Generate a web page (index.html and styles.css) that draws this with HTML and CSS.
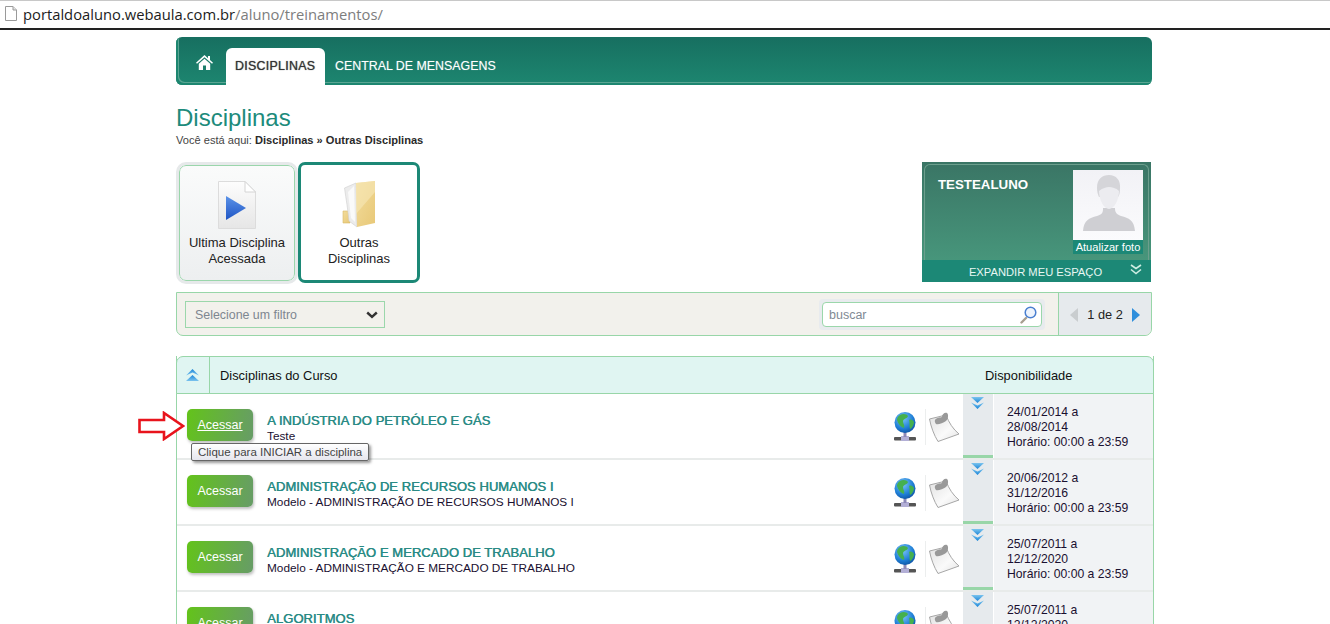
FILE: index.html
```html
<!DOCTYPE html>
<html lang="pt-BR">
<head>
<meta charset="utf-8">
<title>Disciplinas</title>
<link rel="stylesheet" href="styles.css">
</head>
<body>
<svg class="defs" width="0" height="0" aria-hidden="true">
  <defs>
    <linearGradient id="chev" x1="0" y1="0" x2="0" y2="1"><stop offset="0" stop-color="#7cc4ee"/><stop offset="1" stop-color="#1b86d8"/></linearGradient>
    <radialGradient id="globe" cx=".4" cy=".3" r=".8"><stop offset="0" stop-color="#7cc4f8"/><stop offset=".6" stop-color="#1f7fd6"/><stop offset="1" stop-color="#0c4a98"/></radialGradient>
    <linearGradient id="play" x1="0" y1="0" x2="0" y2="1"><stop offset="0" stop-color="#5c93e8"/><stop offset="1" stop-color="#1f55c4"/></linearGradient>
    <linearGradient id="folder" x1="0" y1="0" x2="1" y2="1"><stop offset="0" stop-color="#f2dc9c"/><stop offset="1" stop-color="#e8c877"/></linearGradient>
    <linearGradient id="doc" x1="0" y1="0" x2="0" y2="1"><stop offset="0" stop-color="#fdfdfd"/><stop offset="1" stop-color="#e6e6e6"/></linearGradient>
    <linearGradient id="paper" x1="0" y1="0" x2="1" y2="1"><stop offset="0" stop-color="#e2e2e2"/><stop offset=".6" stop-color="#fafafa"/><stop offset="1" stop-color="#e4e4e4"/></linearGradient>
    <linearGradient id="avatarbg" x1="0" y1="0" x2="0" y2="1"><stop offset="0" stop-color="#f2f2f6"/><stop offset="1" stop-color="#fbfbfd"/></linearGradient>
    <symbol id="i-down" viewBox="0 0 13 12"><path d="M0 0H13L6.500 6Z" fill="url(#chev)"/><path d="M0 5.500L6.500 12L13 5.500L6.500 8.500Z" fill="url(#chev)"/></symbol>
    <symbol id="i-globe" viewBox="0 0 22 30">
      <rect x="0" y="25" width="22" height="3.500" rx="1" fill="#555"/>
      <path d="M7 29V24H15V29Z" fill="#b3afd6"/>
      <rect x="9.500" y="19" width="3" height="6" fill="#8d89b8"/>
      <circle cx="11" cy="10.500" r="10.500" fill="url(#globe)"/>
      <path d="M6 3C9 1 13 2 14 4C13 7 10 6 9 9C9 12 11 13 10 16C7 15 4 12 3 8C3 6 4 4 6 3ZM15 8C17 7 19 8 20 10C20 13 18 16 16 17C15 14 16 11 15 8Z" fill="#45b04e"/>
    </symbol>
    <symbol id="i-note" viewBox="0 0 31 30">
      <path d="M.5 7L17 3C20 11 24 17 30 22L9 29.500C5 23 2 15 .5 7Z" fill="url(#paper)" stroke="#a6a6a6"/>
      <path d="M6 8C8 5 11 6 13 5C13 2 16 0 18 1C20 3 19 7 17 9C14 11 9 13 7 12C6 11 5.500 9 6 8Z" fill="#999"/>
    </symbol>
  </defs>
</svg>

<header class="urlbar">
  <svg class="url-page" width="12" height="15" viewBox="0 0 12 15"><path d="M.5.500H8L11.500 4V14.500H.5Z" fill="#fff" stroke="#9a9a9a"/><path d="M8 .5V4H11.500" fill="#e4e4e4" stroke="#9a9a9a"/></svg>
  <span class="url-host">portaldoaluno.webaula.com.br</span><span class="url-path">/aluno/treinamentos/</span>
</header>

<main class="page">
  <nav class="topnav">
    <a class="nav-home" aria-label="Início">
      <svg width="17" height="15" viewBox="0 0 17 15"><path d="M8.500 0L12 3.200V1H14V5L17 7.700L16 8.800L8.500 2.200L1 8.800L0 7.700ZM2.800 8.800L8.500 3.800L14.200 8.800V15H10V10.500H7V15H2.800Z" fill="#fff"/></svg>
    </a>
    <a class="nav-tab nav-active">DISCIPLINAS</a>
    <a class="nav-tab">CENTRAL DE MENSAGENS</a>
  </nav>

  <h1 class="title">Disciplinas</h1>
  <p class="crumbs">Você está aqui: <b>Disciplinas » Outras Disciplinas</b></p>

  <section class="hero">
    <div class="tiles">
      <a class="tile">
        <svg width="38" height="48" viewBox="0 0 38 48"><path d="M.5.500H27L37.500 11V47.500H.5Z" fill="url(#doc)" stroke="#dcdcdc"/><path d="M27 .5V11H37.500Z" fill="#fff" stroke="#d4d4d4"/><path d="M8 15L28 27L8 39Z" fill="url(#play)"/></svg>
        <span>Ultima Disciplina Acessada</span>
      </a>
      <a class="tile tile-active">
        <svg width="36" height="48" viewBox="0 0 36 48"><path d="M2 31H9V43H2Z" fill="url(#folder)" stroke="#d9b864" stroke-width=".6"/><path d="M3.500 8L15 3L16 47L8 41C7 30 5 19 3.500 8Z" fill="#ececec" stroke="#cfcfcf" stroke-width=".6"/><path d="M7 12L13 6L14 42L10 38Z" fill="#fafafa"/><path d="M15 3L34 1V43L16 47Z" fill="url(#folder)"/><path d="M15 3L34 1V12L15 34Z" fill="#f7e8b8" opacity=".6"/></svg>
        <span class="tile-narrow">Outras Disciplinas</span>
      </a>
    </div>

    <aside class="profile">
      <div class="profile-body">
        <strong class="profile-name">TESTEALUNO</strong>
        <div class="avatar">
          <svg width="70" height="70" viewBox="0 0 70 70"><rect width="70" height="70" fill="url(#avatarbg)"/><path d="M24 46C30 44 30 42 30 38H42C42 42 43 44 48 46C56 48 61 50 62 61H10C11 50 16 48 24 46Z" fill="#cfcfd3"/><path d="M24 18C24 9 29 5 36 5C43 5 48 10 47 19C47 23 46 26 45 27H26C25 25 24 22 24 18Z" fill="#d5d5d9"/><path d="M26 21C30 18 33 17 36 17C39 17 43 18 46 21C46 30 41 39 36 39C31 39 26 30 26 21Z" fill="#ececf0"/></svg>
          <span class="avatar-cap">Atualizar foto</span>
        </div>
      </div>
      <a class="profile-foot">
        <span>EXPANDIR MEU ESPAÇO</span>
        <svg class="foot-chev" width="12" height="11" viewBox="0 0 12 11"><path d="M1 1L6 4.500L11 1M1 5.500L6 9.500L11 5.500" fill="none" stroke="#cfeee4" stroke-width="1.600"/></svg>
      </a>
    </aside>
  </section>

  <section class="filters">
    <div class="select">
      <span>Selecione um filtro</span>
      <svg width="12" height="8" viewBox="0 0 12 8"><path d="M1.200 1.500L6 5.800L10.800 1.500" fill="none" stroke="#333" stroke-width="2.400"/></svg>
    </div>
    <div class="search-wrap">
      <div class="search">
        <span>buscar</span>
        <svg width="17" height="18" viewBox="0 0 17 18"><path d="M1.500 16.500L6 12" stroke="#a89f90" stroke-width="2.400" stroke-linecap="round"/><circle cx="10.500" cy="6.500" r="5.300" fill="#eef4fd" stroke="#4a7fd0" stroke-width="1.500"/></svg>
      </div>
    </div>
    <div class="pager">
      <svg width="8" height="14" viewBox="0 0 8 14"><path d="M8 0V14L0 7Z" fill="#c9cdcf"/></svg>
      <span>1 de 2</span>
      <svg width="8" height="14" viewBox="0 0 8 14"><path d="M0 0V14L8 7Z" fill="#2f8fdc"/></svg>
    </div>
  </section>

  <section class="table">
    <div class="thead">
      <div class="th-toggle"><svg width="13" height="12" viewBox="0 0 13 12"><g transform="matrix(1 0 0 -1 0 12)"><use href="#i-down"/></g></svg></div>
      <div class="th-name">Disciplinas do Curso</div>
      <div class="th-avail">Disponibilidade</div>
    </div>

    <article class="row">
      <div class="row-main">
        <a class="btn btn-hover">Acessar</a>
        <div class="info"><h2>A INDÚSTRIA DO PETRÓLEO E GÁS</h2><p>Teste</p></div>
      </div>
      <div class="row-icons"><svg class="ic-globe"><use href="#i-globe"/></svg><i class="sep"></i><svg class="ic-note"><use href="#i-note"/></svg></div>
      <div class="expand"><svg class="ic-down"><use href="#i-down"/></svg></div>
      <div class="dates">24/01/2014 a<br>28/08/2014<br>Horário: 00:00 a 23:59</div>
    </article>

    <article class="row">
      <div class="row-main">
        <a class="btn">Acessar</a>
        <div class="info"><h2>ADMINISTRAÇÃO DE RECURSOS HUMANOS I</h2><p>Modelo - ADMINISTRAÇÃO DE RECURSOS HUMANOS I</p></div>
      </div>
      <div class="row-icons"><svg class="ic-globe"><use href="#i-globe"/></svg><i class="sep"></i><svg class="ic-note"><use href="#i-note"/></svg></div>
      <div class="expand"><svg class="ic-down"><use href="#i-down"/></svg></div>
      <div class="dates">20/06/2012 a<br>31/12/2016<br>Horário: 00:00 a 23:59</div>
    </article>

    <article class="row">
      <div class="row-main">
        <a class="btn">Acessar</a>
        <div class="info"><h2>ADMINISTRAÇÃO E MERCADO DE TRABALHO</h2><p>Modelo - ADMINISTRAÇÃO E MERCADO DE TRABALHO</p></div>
      </div>
      <div class="row-icons"><svg class="ic-globe"><use href="#i-globe"/></svg><i class="sep"></i><svg class="ic-note"><use href="#i-note"/></svg></div>
      <div class="expand"><svg class="ic-down"><use href="#i-down"/></svg></div>
      <div class="dates">25/07/2011 a<br>12/12/2020<br>Horário: 00:00 a 23:59</div>
    </article>

    <article class="row">
      <div class="row-main">
        <a class="btn">Acessar</a>
        <div class="info"><h2>ALGORITMOS</h2></div>
      </div>
      <div class="row-icons"><svg class="ic-globe"><use href="#i-globe"/></svg><i class="sep"></i><svg class="ic-note"><use href="#i-note"/></svg></div>
      <div class="expand"><svg class="ic-down"><use href="#i-down"/></svg></div>
      <div class="dates">25/07/2011 a<br>12/12/2020</div>
    </article>
  </section>
</main>

<svg class="red-arrow" width="47" height="30" viewBox="0 0 47 30"><path d="M1.500 9H26V2L45 15L26 28V21H1.500Z" fill="#fff" stroke="#e8141c" stroke-width="2.600"/></svg>
<div class="tooltip">Clique para INICIAR a disciplina</div>
</body>
</html>
```

FILE: styles.css
```css
* { box-sizing: border-box; }
html, body { margin: 0; padding: 0; height: 624px; overflow: hidden; background: #fff; }
body { font-family: "Liberation Sans", Arial, sans-serif; font-size: 12px; color: #111; position: relative; }
.defs { position: absolute; }
a { color: inherit; text-decoration: none; }
h1, h2, p { margin: 0; }

.urlbar { height: 30px; display: flex; align-items: center; padding: 0 0 2px 5px; border-top: 1px solid #c8c8c8; border-bottom: 2px solid #222; font-family: "Open Sans", sans-serif; font-size: 14.750px; background: #fff; }
.url-page { margin-right: 6px; }
.url-host { color: #1c1c1c; }
.url-path { color: #7d7d7d; }

.page { width: 978px; margin: 7px 0 0 176px; }

.topnav { width: 976px; height: 48px; display: flex; align-items: flex-end; padding-left: 20px; border-radius: 6px; background: linear-gradient(#176f60, #1d8670); box-shadow: inset 2px -2px 0 0 #1d8670, inset 3px -3px 0 0 #5aa592; }
.nav-home { width: 30px; height: 37px; display: flex; align-items: center; padding-bottom: 8px; }
.nav-tab { height: 37px; display: flex; align-items: center; padding: 0 10px 2px; font-size: 12.400px; color: #fff; text-shadow: 0 0 1px rgba(255,255,255,.4); }
.nav-active { background: #fff; color: #333; border-radius: 6px 6px 0 0; text-shadow: 0 0 1px #555; letter-spacing: .3px; width: 99px; padding-left: 9px; }

.title { margin-top: 19px; font-size: 24px; line-height: 27px; font-weight: 400; color: #1d8b7c; }
.crumbs { margin-top: 2px; font-size: 11.100px; line-height: 14px; color: #444; }
.crumbs b { color: #2a2a2a; }

.hero { margin-top: 15px; width: 975px; height: 120px; display: flex; justify-content: space-between; }
.tiles { display: flex; gap: 2px; }
.tile { display: flex; flex-direction: column; align-items: center; border-radius: 7px; font-size: 13px; line-height: 16px; color: #222; text-align: center; }
.tile:first-child { margin: 3px 0 0 3px; width: 116px; height: 116px; padding-top: 15px; border: 1px solid #9ad6ab; outline: 3px solid #e6e9ea; background: linear-gradient(#fafbfb, #edeff0); }
.tile span { margin-top: 6px; width: 112px; }
.tile-active { width: 122px; height: 121px; padding-top: 15px; border: 3px solid #1c8876; background: #fff; margin-left: 1px; }
.tile-active .tile-narrow { margin-top: 7px; padding: 0 22px; }

.profile { width: 229px; height: 120px; display: flex; flex-direction: column; background: linear-gradient(#3a7565, #4a9d80); padding-top: 2px; }
.profile-body { flex: 1; margin: 0 2px; padding: 5px 5px 0 13px; display: flex; justify-content: space-between; border: 1px solid #6c9f8d; border-bottom: 0; border-radius: 6px 6px 0 0; }
.profile-name { font-size: 13.300px; line-height: 24px; padding-top: 3px; color: #fff; }
.avatar { width: 70px; height: 84px; display: flex; flex-direction: column; }
.avatar svg { display: block; flex: none; }
.avatar-cap { height: 14px; background: #1c8876; color: #fff; font-size: 11.100px; line-height: 14px; text-align: center; white-space: nowrap; }
.profile-foot { height: 22px; flex: none; position: relative; display: flex; align-items: center; justify-content: center; background: #1c8876; color: #e8f7f3; font-size: 11.200px; padding: 1px 2px 0 0; }
.foot-chev { position: absolute; right: 9px; top: 4px; }

.filters { margin-top: 10px; width: 976px; height: 44px; display: flex; align-items: center; border: 1px solid #98d6a8; border-radius: 0 0 7px 7px; background: #f2f1ec; }
.select { width: 200px; height: 27px; margin-left: 8px; padding: 1px 6px 0 9px; display: flex; align-items: center; justify-content: space-between; border: 1px solid #9bd7ab; color: #7e8690; font-size: 12.400px; }
.search-wrap { margin-left: auto; padding: 3px; background: #e8ebee; border-radius: 4px; }
.search { width: 220px; height: 25px; padding: 1px 4px 0 6px; display: flex; align-items: center; justify-content: space-between; background: #fff; border: 1px solid #9bd7ab; border-radius: 4px; color: #7f8a94; font-size: 12.500px; }
.pager { width: 93px; height: 42px; margin-left: 13px; padding-top: 1px; display: flex; align-items: center; justify-content: center; gap: 9px; background: #e6eaed; border-left: 1px solid #98d6a8; border-radius: 0 0 7px 0; color: #222; font-size: 12.800px; }

.table { margin-top: 20px; width: 978px; border-left: 1px solid #98d6a8; border-right: 1px solid #98d6a8; }
.thead { height: 38px; display: flex; align-items: center; margin: 0 -1px; background: #e0f5f2; border: 1px solid #98d6a8; border-radius: 7px 7px 0 0; font-size: 12.900px; }
.th-toggle { width: 33px; height: 36px; padding-right: 2px; display: flex; align-items: center; justify-content: center; border-right: 1px solid #98d6a8; }
.th-name { padding-left: 10px; flex: 1; }
.th-avail { width: 168px; }

.row { height: 66px; display: flex; border-bottom: 2px solid #e8ebea; }
.row-main { flex: 1; display: flex; padding: 15px 0 0 10px; }
.btn { width: 66px; height: 32px; display: flex; align-items: center; justify-content: center; border-radius: 5px; background: linear-gradient(100deg, #63c31a, #679c67); color: #fff; font-size: 12.500px; box-shadow: 1px 2px 3px rgba(0,0,0,.25); }
.btn-hover { text-decoration: underline; }
.info { margin-left: 14px; padding-top: 3px; }
.info h2 { font-size: 13px; line-height: 17px; font-weight: 400; letter-spacing: .05px; color: #2a8b85; text-shadow: .5px 0 0 #2a8b85; white-space: nowrap; }
.info p { font-size: 11.800px; line-height: 14px; color: #1a1030; white-space: nowrap; }

.row-icons { width: 69px; display: flex; align-items: flex-start; padding-top: 18px; }
.ic-globe { width: 22px; height: 30px; margin-right: 9px; }
.sep { width: 1px; height: 36px; margin-top: -3px; background: #eceeee; flex: none; }
.ic-note { width: 31px; height: 30px; margin-left: 3px; }
.expand { width: 30px; height: 64px; background: linear-gradient(#e6eaed 61px, #98d6a8 61px); display: flex; justify-content: center; padding: 3px 1px 0 0; }
.ic-down { width: 13px; height: 12px; }
.dates { width: 159px; margin-left: 1px; padding: 11px 0 0 13px; background: #f1f3f5; font-size: 12.200px; line-height: 15px; color: #1a1030; }

.red-arrow { position: absolute; left: 138px; top: 411px; }
.tooltip { position: absolute; left: 191px; top: 443px; height: 18px; padding: 0 6px; line-height: 16px; font-size: 11.500px; color: #444; background: linear-gradient(#fff, #e6e6ee); border: 1px solid #666; border-radius: 2px; box-shadow: 2px 2px 3px rgba(0,0,0,.4); white-space: nowrap; }
```
